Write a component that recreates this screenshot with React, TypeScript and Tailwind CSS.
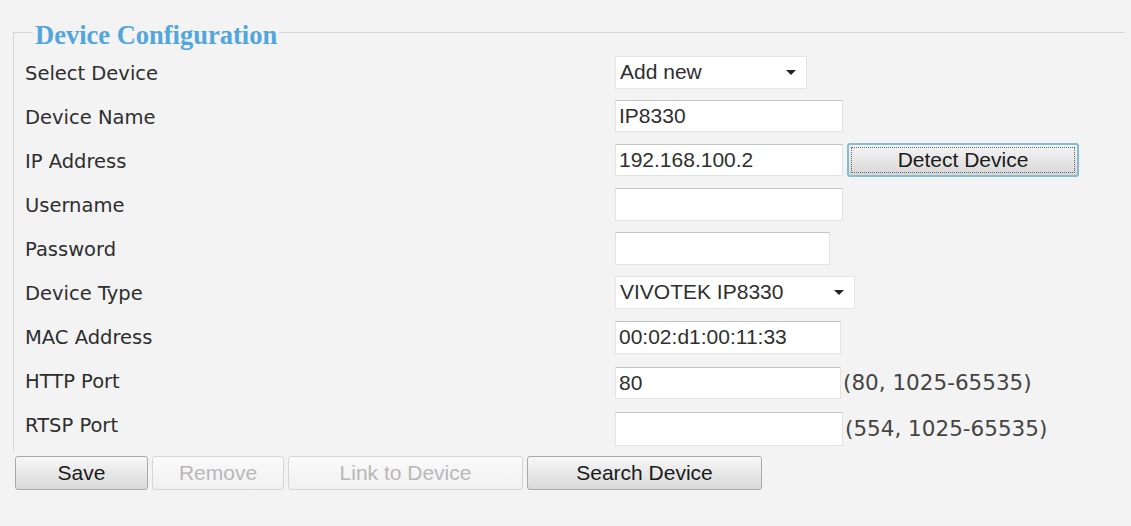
import React from "react";

const sans = "font-['DejaVu_Sans',Verdana,sans-serif]";
const arial = "font-['Liberation_Sans',Arial,sans-serif]";

const Field = ({ width, value, extra = "" }: { width: string; value?: string; extra?: string }) => (
  <input
    readOnly
    value={value ?? ""}
    className={`${width} ${extra} h-[32px] bg-white border border-[#e3e3e3] border-t-[#c4c4c4] px-[3px] text-[21px] text-[#2f2f2f] ${arial} outline-none`}
  />
);

const Select = ({ width, value }: { width: string; value: string }) => (
  <div
    className={`${width} h-[33px] bg-white border border-[#e6e6e6] flex items-center justify-between pl-[4px] pr-[10px] text-[21px] text-[#2f2f2f] ${arial}`}
  >
    <span>{value}</span>
    <span className="w-0 h-0 border-l-[5px] border-r-[5px] border-t-[5px] border-l-transparent border-r-transparent border-t-[#222]" />
  </div>
);

const Button = ({ label, width, disabled = false }: { label: string; width: string; disabled?: boolean }) => (
  <button
    className={`${width} h-[34px] rounded-[3px] border text-[21px] ${arial} ${
      disabled
        ? "border-[#d6d6d6] bg-gradient-to-b from-[#fafafa] to-[#f1f1f1] text-[#b8b8b8]"
        : "border-[#a9a9a9] bg-gradient-to-b from-[#f7f7f7] to-[#d9d9d9] text-[#1a1a1a]"
    }`}
  >
    {label}
  </button>
);

const Row = ({ label, children }: { label: string; children: React.ReactNode }) => (
  <div className="flex items-center h-[44px]">
    <div className={`w-[590px] pt-[4px] text-[19.5px] text-[#2e2e2e] ${sans}`}>{label}</div>
    <div className="flex items-center">{children}</div>
  </div>
);

export default function App() {
  return (
    <div className="w-[1131px] h-[526px] bg-[#f3f3f3] overflow-hidden">
      <fieldset className="ml-[13px] mr-[6px] mt-[14px] border-t border-l border-[#d6d6d6] pl-[11px] pb-[6px]">
        <legend
          className={`ml-[8px] px-[2px] pt-[6px] text-[26.5px] leading-[30px] font-bold text-[#52a6de] font-['Liberation_Serif','Times_New_Roman',serif]`}
        >
          Device Configuration
        </legend>
        <Row label="Select Device">
          <Select width="w-[192px]" value="Add new" />
        </Row>
        <Row label="Device Name">
          <Field width="w-[228px]" value="IP8330" extra="h-[30px]" />
        </Row>
        <Row label="IP Address">
          <Field width="w-[228px]" value="192.168.100.2" />
          <button
            className={`ml-[4px] w-[232px] h-[34px] rounded-[3px] border-2 border-[#86bccf] bg-gradient-to-b from-[#f5f5f5] to-[#d8d8d8] p-[2px] text-[21px] text-[#1a1a1a] ${arial}`}
          >
            <span className="flex items-center justify-center h-full w-full border border-dotted border-[#666]">
              Detect Device
            </span>
          </button>
        </Row>
        <Row label="Username">
          <Field width="w-[228px]" extra="h-[33px]" />
        </Row>
        <Row label="Password">
          <Field width="w-[215px]" extra="h-[33px]" />
        </Row>
        <Row label="Device Type">
          <Select width="w-[240px]" value="VIVOTEK IP8330" />
        </Row>
        <Row label="MAC Address">
          <Field width="w-[226px]" value="00:02:d1:00:11:33" extra="h-[33px] mt-[2px]" />
        </Row>
        <Row label="HTTP Port">
          <Field width="w-[226px]" value="80" extra="mt-[6px]" />
          <span className={`ml-[2px] mt-[6px] text-[21.5px] text-[#444] ${sans}`}>(80, 1025-65535)</span>
        </Row>
        <Row label="RTSP Port">
          <Field width="w-[228px]" extra="h-[34px] mt-[10px] border-[#c8c8c8]" />
          <span className={`ml-[2px] mt-[10px] text-[21.5px] text-[#444] ${sans}`}>(554, 1025-65535)</span>
        </Row>
      </fieldset>
      <div className="flex gap-[4px] ml-[15px] mt-[4px]">
        <Button label="Save" width="w-[133px]" />
        <Button label="Remove" width="w-[132px]" disabled />
        <Button label="Link to Device" width="w-[235px]" disabled />
        <Button label="Search Device" width="w-[235px]" />
      </div>
    </div>
  );
}
